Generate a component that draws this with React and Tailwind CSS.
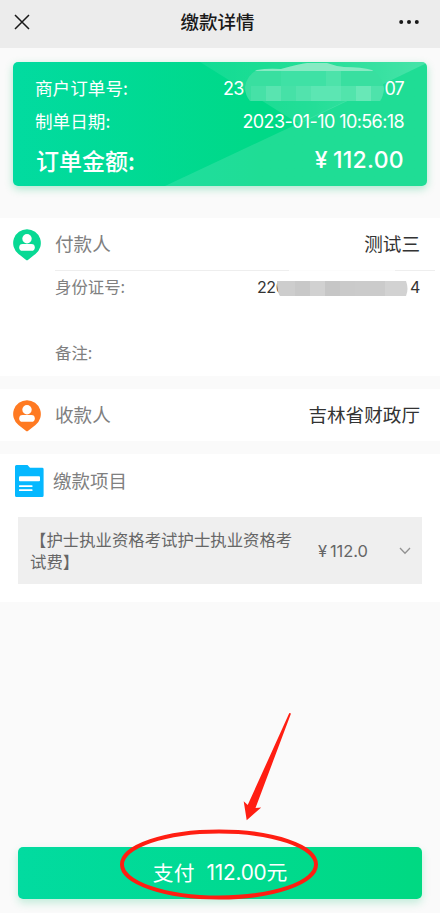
import React from 'react';

const num = 'font-[Inter,"Noto_Sans_CJK_SC",sans-serif]';

const PersonPin = ({ className }) => (
    <svg className={className} width="28" height="32" viewBox="0 0 28 32">
        <path fill="currentColor" d="M14 0.2a13.8 13.8 0 0 1 8.5 24.7L15.2 30.7q-1.2 1-2.4 0L5.5 24.9A13.8 13.8 0 0 1 14 0.2z" />
        <circle cx="14" cy="9.8" r="4.7" fill="#fff" />
        <rect x="6.2" y="15" width="15.6" height="6.8" rx="3.4" fill="#fff" />
    </svg>
);

const FileIcon = () => (
    <svg width="29" height="32" viewBox="0 0 29 32">
        <path fill="#05b8ff" d="M1.5 0H12.5L15 2.8H27.2Q28.6 2.8 28.6 4.2V30.5Q28.6 32 27.1 32H1.5Q0 32 0 30.5V1.5Q0 0 1.5 0z" />
        <rect x="4" y="11.2" width="21" height="5" rx="1" fill="#fff" />
        <rect x="4" y="20.2" width="13.5" height="1.8" rx=".6" fill="#fff" />
        <rect x="4" y="24.2" width="13.5" height="1.8" rx=".6" fill="#fff" />
    </svg>
);

const OrderMask = () => (
    <svg className="absolute left-[231px] top-0" width="142" height="46" viewBox="0 0 142 46">
        <defs>
            <clipPath id="orderMask">
                <path d="M13 8Q24 6 37 7Q55 2 63 1H83Q91 4 100 5Q118 5 128 8Q139 15 140 27Q139 35 136 39H6Q1 33 1 25Q3 13 13 8z" />
            </clipPath>
        </defs>
        <g clipPath="url(#orderMask)" shapeRendering="crispEdges">
            <rect width="142" height="40" fill="#39dfa0" />
            <rect width="142" height="9" fill="#88eac3" />
            <rect x="37" y="9" width="45" height="15" fill="#3fe1a5" />
            <rect x="82" y="9" width="15" height="15" fill="#4de3aa" />
            <rect x="7" y="24" width="15" height="16" fill="#46e1a7" />
            <rect x="22" y="24" width="15" height="16" fill="#59e4b0" />
            <rect x="37" y="24" width="15" height="16" fill="#46e1a7" />
            <rect x="52" y="24" width="15" height="16" fill="#52e3ad" />
            <rect x="67" y="24" width="30" height="16" fill="#5ce6b3" />
            <rect x="97" y="24" width="15" height="16" fill="#52e4ac" />
            <rect x="112" y="24" width="15" height="16" fill="#68e8b7" />
            <rect x="127" y="24" width="15" height="16" fill="#4ee3ab" />
        </g>
    </svg>
);

const idBlocks = [
    { x: 0, width: 18, fill: '#cdcdcd' },
    { x: 18, width: 15, fill: '#c8c8c8' },
    { x: 33, width: 15, fill: '#d1d1d1' },
    { x: 48, width: 15, fill: '#c6c6c6' },
    { x: 63, width: 15, fill: '#cacaca' },
    { x: 78, width: 30, fill: '#cbcbcb' },
    { x: 108, width: 24, fill: '#d2d2d2' },
];

const IdMask = () => (
    <svg className="absolute right-[26px] top-[10px]" width="132" height="15" viewBox="0 0 132 15">
        <clipPath id="idMask">
            <path d="M0 0H129Q132 8 129 15H3Q0 11 0 0z" />
        </clipPath>
        <g clipPath="url(#idMask)">
            {idBlocks.map((block) => (
                <rect key={block.x} x={block.x} y="0" width={block.width} height="15" fill={block.fill} />
            ))}
        </g>
    </svg>
);

const Header = () => (
    <header className="flex h-12 items-center justify-between bg-[#ececec] pr-[21px] pl-[14px] text-[#191919]">
        <svg className="mt-[-5px]" width="16" height="16" viewBox="0 0 16 16" fill="none" stroke="currentColor" strokeWidth="1.5">
            <path d="M1 1L15 15M15 1L1 15" />
        </svg>
        <h1 className="mt-[-7px] ml-[6px] text-[18.5px] leading-6 font-medium">缴款详情</h1>
        <svg className="mt-[-5px]" width="20" height="6" viewBox="0 0 20 6" fill="currentColor">
            <circle cx="2.2" cy="3" r="2" />
            <circle cx="10" cy="3" r="2" />
            <circle cx="17.8" cy="3" r="2" />
        </svg>
    </header>
);

const OrderCard = () => (
    <section className="relative mx-[13px] mt-[14px] h-[124px] rounded-[5px] bg-gradient-to-r from-[#02dba0] to-[#00d987] to-60% px-[23px] pt-[11px] text-white shadow-[0_3px_8px_rgba(0,190,110,0.3)]">
        <svg className="absolute inset-0 rounded-[5px]" width="414" height="124" viewBox="0 0 414 124">
            <defs>
                <linearGradient id="shine" x1="0" y1="0" x2="1" y2="0">
                    <stop offset="0" stopColor="#fff" stopOpacity=".07" />
                    <stop offset=".5" stopColor="#fff" stopOpacity=".14" />
                    <stop offset="1" stopColor="#fff" stopOpacity=".28" />
                </linearGradient>
            </defs>
            <path d="M187 0H414V1L286 62Z" fill="url(#shine)" />
            <path d="M152 124L414 1V124Z" fill="#fff" fillOpacity=".12" />
        </svg>
        <OrderMask />
        <div className="relative flex h-[30px] items-center justify-between text-[17.6px]">
            <span className="ml-[-1px]">商户订单号:</span>
            <span className={`${num} mt-px flex w-[181px] justify-between text-[18px] tracking-[-0.8px]`}>
                <span>23</span>
                <span>07</span>
            </span>
        </div>
        <div className="relative mt-[3px] flex h-[30px] items-center justify-between text-[17.6px]">
            <span className="ml-[-1px]">制单日期:</span>
            <span className={`${num} mt-px text-[18px] tracking-[-0.6px]`}>2023-01-10 10:56:18</span>
        </div>
        <div className="relative mt-[6px] flex h-9 items-center justify-between text-[23px] font-medium">
            <span>订单金额:</span>
            <span className={`${num} mt-px flex gap-[5px] text-[23px] tracking-[0.3px]`}>
                <span>¥</span>
                <span>112.00</span>
            </span>
        </div>
    </section>
);

const PartyRow = ({ label, name, color }) => (
    <div className="flex h-[51px] items-center pr-5 pl-[13px] text-[18.6px]">
        <PersonPin className={`${color} mt-[3px]`} />
        <span className="mt-[-2px] ml-[14px] text-[#808080]">{label}</span>
        <span className="mt-[-2px] ml-auto text-[#333]">{name}</span>
    </div>
);

const Annotation = () => (
    <svg className="pointer-events-none absolute top-[710px] left-[115px]" width="210" height="192" viewBox="0 0 210 192">
        <path fill="#ff1e12" d="M174.3 3L176 3.6L140.5 98L146.2 97.5L131.7 110.3L128.7 91.2L132.7 95Z" />
        <ellipse cx="104" cy="154.5" rx="97" ry="33" fill="none" stroke="#ff1e12" strokeWidth="4" />
    </svg>
);

const App = () => {
    return (
        <main className='relative flex h-[913px] w-[440px] flex-col overflow-hidden bg-[#fafafa] font-["Noto_Sans_CJK_SC",sans-serif]'>
            <Header />
            <OrderCard />

            <section className="mt-8 h-[158px] bg-white">
                <PartyRow label="付款人" name="测试三" color="text-[#08d994]" />
                <div className="relative mt-px mr-[5px] ml-[55px] flex h-[32px] items-center justify-between border-t border-[#eee] pr-[15px] text-[16.4px]">
                    <div className="absolute -top-px left-[234px] h-px w-[106px] bg-[#fcfcfc]" />
                    <span className="text-[#808080]">身份证号:</span>
                    <span className={`${num} flex w-[163px] justify-between text-[16px] tracking-[-0.4px] text-[#333]`}>
                        <span>220</span>
                        <span>4</span>
                    </span>
                    <IdMask />
                </div>
                <p className="mt-[37px] ml-[55px] text-[16.4px] leading-[26px] text-[#808080]">备注:</p>
            </section>

            <section className="mt-[13px] h-[52px] bg-white">
                <PartyRow label="收款人" name="吉林省财政厅" color="text-[#ff7a22]" />
            </section>

            <section className="mt-[13px] h-[148px] bg-white">
                <div className="flex h-[63px] items-center pb-[9px] pl-[15px]">
                    <FileIcon />
                    <h2 className="ml-[9px] text-[18.5px] text-[#808080]">缴款项目</h2>
                </div>
                <div className="mx-[18px] flex h-[67px] items-center bg-[#efefef] pl-3 text-[#666]">
                    <p className="mt-[-2px] w-[264px] text-[16.4px] leading-[22px]">
                        【护士执业资格考试护士执业资格考试费】
                    </p>
                    <span className={`${num} mt-px ml-6 flex w-[52px] gap-[3px] text-[16.5px] tracking-[-0.1px]`}>
                        <span>¥</span>
                        <span>112.0</span>
                    </span>
                    <svg className="ml-[29px]" width="12" height="8" viewBox="0 0 12 8" fill="none" stroke="#929292" strokeWidth="1.3">
                        <path d="M1 1L6 6.3L11 1" />
                    </svg>
                </div>
            </section>

            <button className="mx-[18px] mt-auto mb-[14px] flex h-[52px] items-center justify-center gap-3 rounded-[5px] bg-gradient-to-r from-[#02dba0] to-[#00d982] text-[20.8px] text-white shadow-[0_4px_9px_rgba(0,190,110,0.22)]">
                <span>支付</span>
                <span className={`${num} tracking-[-0.2px]`}>112.00元</span>
            </button>
            <Annotation />
        </main>
    );
};

export default App;
